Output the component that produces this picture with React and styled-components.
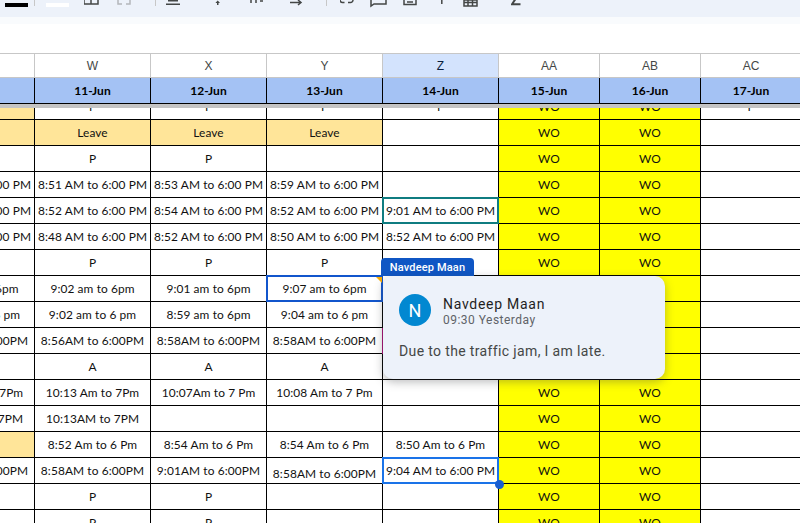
import React from "react";
import styled, { createGlobalStyle } from "styled-components";

const columns = ["V", "W", "X", "Y", "Z", "AA", "AB", "AC"];
const dates = ["10-Jun", "11-Jun", "12-Jun", "13-Jun", "14-Jun", "15-Jun", "16-Jun", "17-Jun"];

// one entry per row, columns V to Z. AA and AB are always WO
const rows = [
  { cells: ["", "P", "P", "P", "P"], last: "P", orange: [0] },
  { cells: ["Leave", "Leave", "Leave", "Leave", ""], orange: [0, 1, 2, 3] },
  { cells: ["P", "P", "P", "", ""] },
  { cells: ["8:50 AM to 6:00 PM", "8:51 AM to 6:00 PM", "8:53 AM to 6:00 PM", "8:59 AM to 6:00 PM", ""] },
  { cells: ["8:50 AM to 6:00 PM", "8:52 AM to 6:00 PM", "8:54 AM to 6:00 PM", "8:52 AM to 6:00 PM", "9:01 AM to 6:00 PM"], ring: { 4: "#0f7c80" } },
  { cells: ["8:50 AM to 6:00 PM", "8:48 AM to 6:00 PM", "8:52 AM to 6:00 PM", "8:50 AM to 6:00 PM", "8:52 AM to 6:00 PM"] },
  { cells: ["P", "P", "P", "P", ""] },
  { cells: ["9:02 am to 6pm", "9:02 am to 6pm", "9:01 am to 6pm", "9:07 am to 6pm", ""], ring: { 3: "#1155cc" } },
  { cells: ["9:02 am to 6 pm", "9:02 am to 6 pm", "8:59 am to 6pm", "9:04 am to 6 pm", ""] },
  { cells: ["8:56AM to 6:00PM", "8:56AM to 6:00PM", "8:58AM to 6:00PM", "8:58AM to 6:00PM", ""], marked: 4 },
  { cells: ["A", "A", "A", "A", ""] },
  { cells: ["10:13 Am to 7Pm", "10:13 Am to 7Pm", "10:07Am to 7 Pm", "10:08 Am to 7 Pm", ""] },
  { cells: ["10:13AM to 7PM", "10:13AM to 7PM", "", "", ""] },
  { cells: ["", "8:52 Am to 6 Pm", "8:54 Am to 6 Pm", "8:54 Am to 6 Pm", "8:50 Am to 6 Pm"], orange: [0] },
  { cells: ["8:58AM to 6:00PM", "8:58AM to 6:00PM", "9:01AM to 6:00PM", "8:58AM to 6:00PM", "9:04 AM to 6:00 PM"], low: 3, ring: { 4: "#1a73e8" }, handle: 4 },
  { cells: ["P", "P", "P", "", ""] },
  { cells: ["P", "P", "P", "", ""] },
];

const GlobalStyle = createGlobalStyle`
  html, body {
    margin: 0;
    padding: 0;
    background: #fff;
  }
`;

const Page = styled.div`
  position: relative;
  width: 800px;
  height: 523px;
  overflow: hidden;
  display: flex;
  flex-direction: column;
  background: #fff;
`;
const Toolbar = styled.div`
  height: 17px;
  flex: none;
  display: flex;
  background: #edf2fa;
`;
const ToolSlot = styled.div`
  width: ${(p) => p.$w}px;
  flex: none;
  height: 17px;
`;
const ToolStrip = styled.div`
  height: 7px;
  flex: none;
  background: #f9fbfd;
`;
const FormulaBar = styled.div`
  height: 29px;
  flex: none;
  background: #fff;
`;
const Track = styled.div`
  display: grid;
  grid-template-columns: repeat(5, 116px) repeat(3, 101px);
  margin-left: -81px;
  width: 881px;
`;
const ColumnRow = styled(Track)`
  height: 25px;
  flex: none;
  box-sizing: border-box;
  border-top: 1px solid #c7c7c7;
  border-bottom: 1px solid #c7c7c7;
`;
const ColumnLabel = styled.div`
  border-right: 1px solid #c7c7c7;
  background: ${(p) => (p.$active ? "#d3e3fd" : "#fff")};
  color: ${(p) => (p.$active ? "#0b1f3f" : "#444746")};
  font: 12px "Liberation Sans", Arial, sans-serif;
  display: flex;
  align-items: center;
  justify-content: center;
`;
const DateRow = styled(Track)`
  height: 26px;
  flex: none;
  box-sizing: border-box;
  background: #a4c2f4;
  border-bottom: 1px solid #000;
`;
const DateCell = styled.div`
  border-right: 1px solid #000;
  color: #000;
  font: 700 12px Lato, "Open Sans", sans-serif;
  display: flex;
  align-items: center;
  justify-content: center;
`;
const FreezeBar = styled.div`
  height: 4px;
  flex: none;
  background: #c4c4c4;
`;
const Scroll = styled.div`
  flex: 1;
  overflow: hidden;
`;
const Body = styled(Track)`
  margin-top: -14px;
  grid-auto-rows: 26px;
`;
const Cell = styled.div`
  position: relative;
  box-sizing: border-box;
  border-right: 1px solid #000;
  border-bottom: 1px solid #000;
  background: ${(p) => p.$bg || "#fff"};
  color: #111;
  font: 11.9px Lato, "Open Sans", sans-serif;
  letter-spacing: 0.1px;
  white-space: nowrap;
  display: flex;
  justify-content: center;
  align-items: ${(p) => (p.$low ? "flex-end" : "center")};
  ${(p) => (p.$low ? "padding-bottom: 2px;" : "")}
  ${(p) => (p.$marked ? "box-shadow: -1px 0 0 #a50e73;" : "")}
`;
const Ring = styled.div`
  position: absolute;
  top: -1px;
  left: -1px;
  right: -1px;
  bottom: -1px;
  border: 2px solid ${(p) => p.$color};
  z-index: 2;
`;
const Handle = styled.div`
  position: absolute;
  right: -6px;
  bottom: -6px;
  width: 9px;
  height: 9px;
  border-radius: 50%;
  background: #1a5fd0;
  z-index: 3;
`;
const NameChip = styled.div`
  position: absolute;
  left: 381px;
  top: 258px;
  width: 93px;
  height: 18px;
  box-sizing: border-box;
  background: #0f56c4;
  border-radius: 4px 4px 0 0;
  color: #fff;
  font: 500 11px Roboto, sans-serif;
  letter-spacing: 0.15px;
  display: flex;
  align-items: center;
  justify-content: center;
  z-index: 4;
`;
const Corner = styled.div`
  position: absolute;
  left: 376px;
  top: 277px;
  width: 0;
  height: 0;
  border-top: 6px solid #f9ab00;
  border-left: 6px solid transparent;
  z-index: 3;
`;
const Card = styled.div`
  position: absolute;
  left: 383px;
  top: 276px;
  width: 282px;
  height: 103px;
  box-sizing: border-box;
  padding: 18px 16px;
  background: #edf2fa;
  border-radius: 10px;
  box-shadow: 0 3px 10px rgba(60, 64, 67, 0.35);
  z-index: 5;
`;
const Author = styled.div`
  display: flex;
  align-items: flex-start;
  gap: 12px;
`;
const Avatar = styled.div`
  width: 32px;
  height: 32px;
  border-radius: 50%;
  background: #0288d1;
  color: #fff;
  font: 400 18px Roboto, sans-serif;
  display: flex;
  align-items: center;
  justify-content: center;
`;
const AuthorText = styled.div`
  padding-top: 2px;
`;
const AuthorName = styled.div`
  color: #1f1f1f;
  font: 400 14px/16px Roboto, sans-serif;
  letter-spacing: 0.72px;
`;
const CommentTime = styled.div`
  color: #5f6368;
  font: 400 12px/17px Roboto, sans-serif;
  letter-spacing: 0.48px;
`;
const CommentText = styled.div`
  margin-top: 14px;
  color: #444746;
  font: 400 14px/16px Roboto, sans-serif;
  letter-spacing: 0.36px;
`;

// toolbar icons are cut by the top of the picture, only their lower parts show
const icon = { fill: "none", stroke: "#444746", strokeWidth: 1.5 };
const toolIcons = [
  { w: 34, draw: <rect x="5" y="3" width="23" height="4" fill="#000" /> },
  { w: 12, draw: <rect x="0" y="0" width="1" height="6" fill="#c7c7c7" /> },
  { w: 38, draw: <rect x="0" y="3" width="23" height="4" fill="#fff" /> },
  { w: 33, draw: <path d="M0 -3v7h14v-7M7 -3v7" {...icon} /> },
  { w: 38, draw: <path d="M1 0v4h4M9 4h4v-4" {...icon} stroke="#b4b7bb" /> },
  { w: 11, draw: <rect x="0" y="0" width="1" height="6" fill="#c7c7c7" /> },
  { w: 48, draw: <path d="M0 4.2h14M2 0.8h10" {...icon} /> },
  { w: 36, draw: <path d="M3 5h1.5v-2h1.5l-2.3 -2.5l-2.3 2.5h1.6z" fill="#444746" /> },
  { w: 40, draw: <path d="M1 3v-3M6 3v-3M10 1h3" {...icon} /> },
  { w: 36, draw: <path d="M0 2.5h10M8 0l3 2.5l-3 2.5" {...icon} /> },
  { w: 14, draw: <rect x="0" y="0" width="1" height="6" fill="#c7c7c7" /> },
  { w: 30, draw: <path d="M0 0a2.5 2.5 0 0 0 2.5 2.5h2M8 2.5h2.5a2.5 2.5 0 0 0 2.5 -2.5" {...icon} /> },
  { w: 33, draw: <path d="M1 -1v7l3 -2h12v-5" {...icon} /> },
  { w: 38, draw: <path d="M1 0v4.5h12v-4.5M4 2h6" {...icon} /> },
  { w: 22, draw: <path d="M0.8 0v4" {...icon} /> },
  { w: 48, draw: <path d="M1 -1v7h13v-6h-13M1 2.5h13M5 0v6M9.5 0v6" {...icon} /> },
  { w: 20, draw: <path d="M4.5 -1L1 4.2H9.5" {...icon} strokeWidth="2" /> },
];

function App() {
  return (
    <Page>
      <GlobalStyle />
      <Toolbar>
        {toolIcons.map((tool, i) => (
          <ToolSlot key={i} $w={tool.w}>
            <svg width={tool.w} height="17" viewBox={`0 0 ${tool.w} 17`}>
              {tool.draw}
            </svg>
          </ToolSlot>
        ))}
      </Toolbar>
      <ToolStrip />
      <FormulaBar />
      <ColumnRow>
        {columns.map((name) => (
          <ColumnLabel key={name} $active={name === "Z"}>
            {name}
          </ColumnLabel>
        ))}
      </ColumnRow>
      <DateRow>
        {dates.map((date) => (
          <DateCell key={date}>{date}</DateCell>
        ))}
      </DateRow>
      <FreezeBar />
      <Scroll>
        <Body>
          {rows.map((row, r) => (
            <React.Fragment key={r}>
              {row.cells.map((text, c) => (
                <Cell
                  key={c}
                  $bg={row.orange && row.orange.includes(c) ? "#ffe599" : ""}
                  $low={row.low === c}
                  $marked={row.marked === c}
                >
                  {text}
                  {row.ring && row.ring[c] && <Ring $color={row.ring[c]} />}
                  {row.handle === c && <Handle />}
                </Cell>
              ))}
              <Cell $bg="#ffff00">WO</Cell>
              <Cell $bg="#ffff00">WO</Cell>
              <Cell>{row.last}</Cell>
            </React.Fragment>
          ))}
        </Body>
      </Scroll>
      <Corner />
      <NameChip>Navdeep Maan</NameChip>
      <Card>
        <Author>
          <Avatar>N</Avatar>
          <AuthorText>
            <AuthorName>Navdeep Maan</AuthorName>
            <CommentTime>09:30 Yesterday</CommentTime>
          </AuthorText>
        </Author>
        <CommentText>Due to the traffic jam, I am late.</CommentText>
      </Card>
    </Page>
  );
}

export default App;
